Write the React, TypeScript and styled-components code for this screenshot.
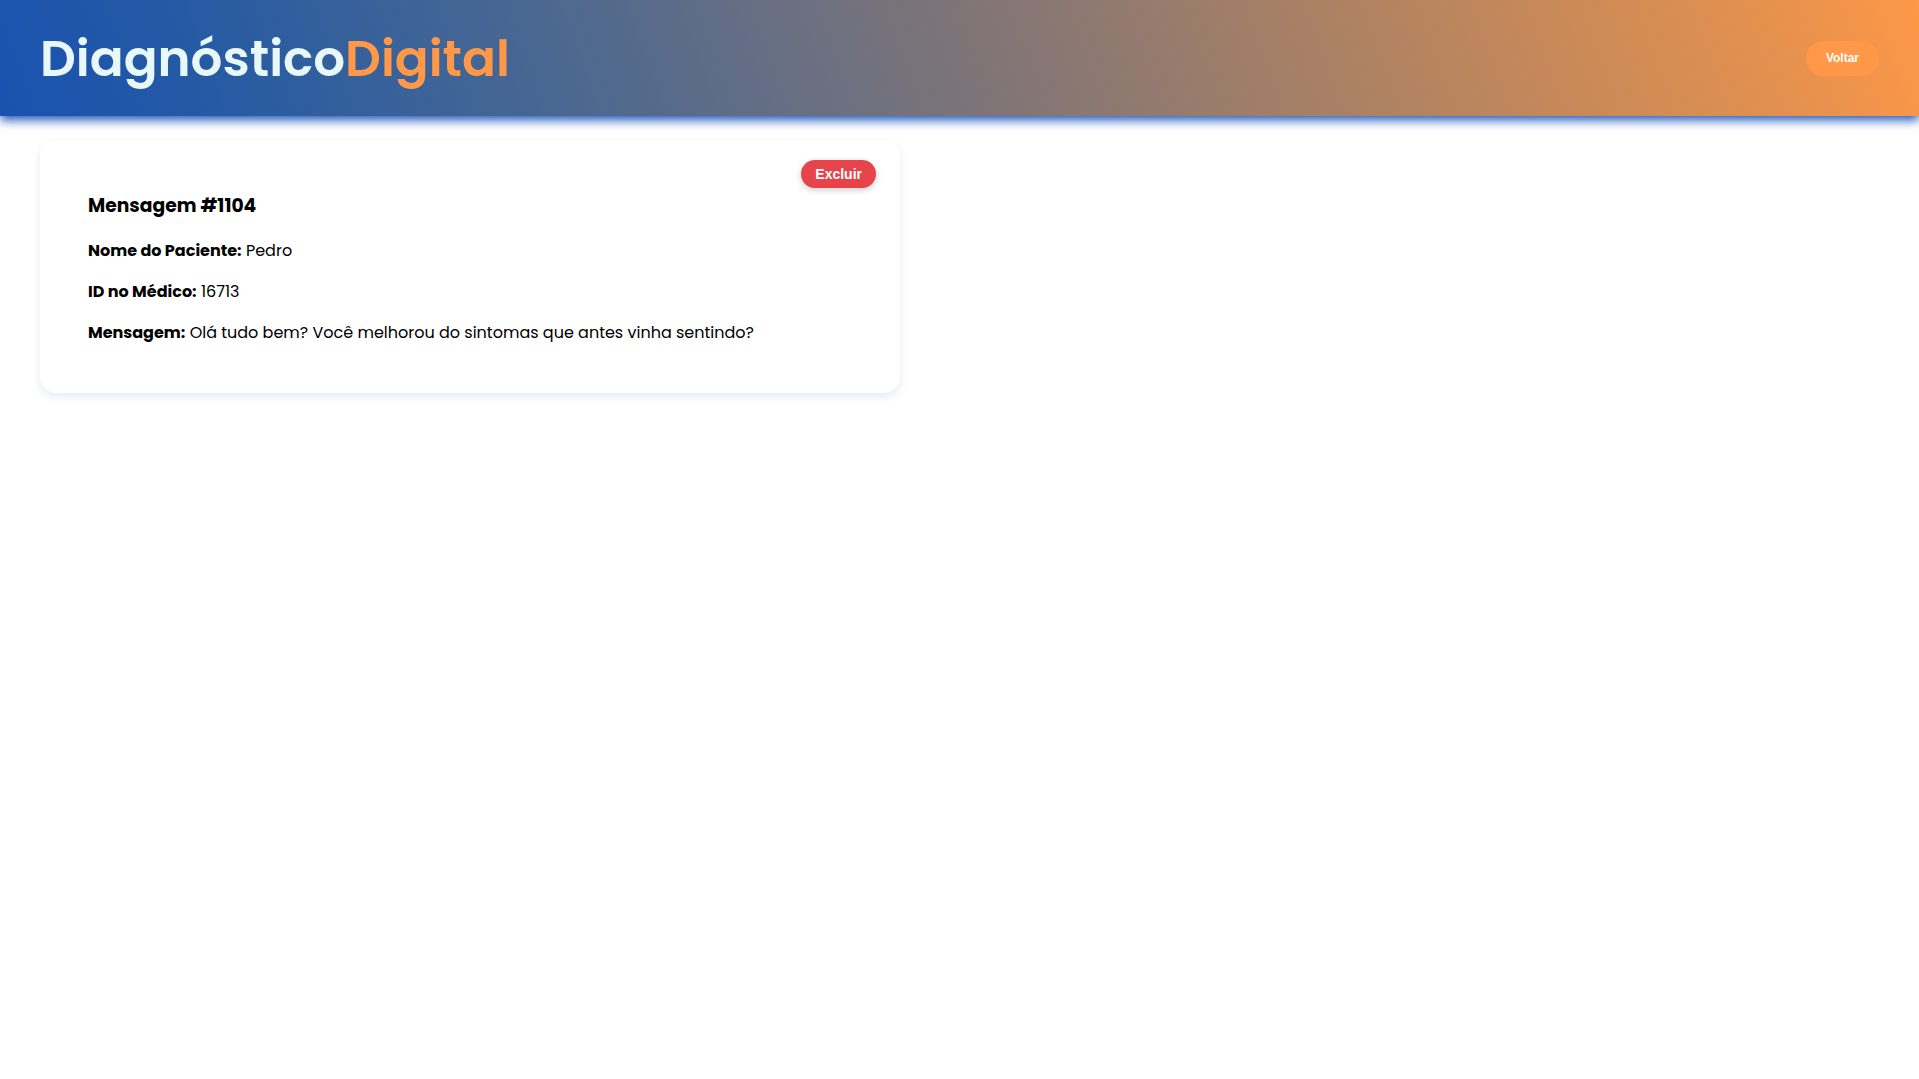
import React from "react";
import styled, { createGlobalStyle } from "styled-components";

const GlobalStyle = createGlobalStyle`
  * { box-sizing: border-box; }
  body {
    margin: 0;
    background: #ffffff;
    color: #000000;
    font-family: Poppins, Inter, sans-serif;
    font-size: 16px;
    line-height: 25px;
  }
`;

const Header = styled.header`
  display: flex;
  align-items: center;
  justify-content: space-between;
  padding: 21px 40px 20px;
  background: linear-gradient(
    70deg,
    #1a52b0,
    #255aa4 11%,
    #4a6891 29%,
    #7d7478 50%,
    #af8262 71%,
    #e5914e 92%,
    #ff9848
  );
  box-shadow: 0 4px 10px #1a52b8;
`;

const Logo = styled.h1`
  margin: 0;
  font-size: 50px;
  font-weight: 600;
  line-height: 75px;
  color: #e8f8f8;
`;

const LogoAccent = styled.span`
  color: #ff9848;
`;

const Button = styled.button`
  border: 0;
  border-radius: 20px;
  color: #ffffff;
  font-family: Arial, "Liberation Sans", sans-serif;
  font-weight: 700;
  cursor: pointer;
`;

const BackButton = styled(Button)`
  padding: 10px 20px;
  background: #ff9848;
  font-size: 12px;
  line-height: 15px;
`;

const DeleteButton = styled(Button)`
  position: absolute;
  top: 20px;
  right: 24px;
  padding: 6px 14px;
  background: #e6444a;
  box-shadow: 0 2px 6px rgba(0, 0, 0, 0.2);
  font-size: 14px;
  line-height: 16px;
`;

const Messages = styled.main`
  display: grid;
  gap: 24px;
  padding: 24px 40px;
`;

const Card = styled.article`
  position: relative;
  display: grid;
  gap: 16px;
  width: 100%;
  max-width: 860px;
  padding: 48px;
  border-radius: 16px;
  background: #ffffff;
  box-shadow: 0 4px 8px rgba(26, 60, 150, 0.1);
`;

const CardTitle = styled.h3`
  margin: 0;
  padding-top: 2px;
  line-height: 32px;
`;

const Field = styled.p`
  margin: 0;
`;

const messages = [
  {
    id: 1104,
    patient: "Pedro",
    doctorId: "16713",
    text: "Olá tudo bem? Você melhorou do sintomas que antes vinha sentindo?",
  },
];

export default function App() {
  return (
    <>
      <GlobalStyle />
      <Header>
        <Logo>
          Diagnóstico<LogoAccent>Digital</LogoAccent>
        </Logo>
        <BackButton type="button">Voltar</BackButton>
      </Header>
      <Messages>
        {messages.map((message) => (
          <Card key={message.id}>
            <DeleteButton type="button">Excluir</DeleteButton>
            <CardTitle>Mensagem #{message.id}</CardTitle>
            <Field>
              <strong>Nome do Paciente:</strong> {message.patient}
            </Field>
            <Field>
              <strong>ID no Médico:</strong> {message.doctorId}
            </Field>
            <Field>
              <strong>Mensagem:</strong> {message.text}
            </Field>
          </Card>
        ))}
      </Messages>
    </>
  );
}
